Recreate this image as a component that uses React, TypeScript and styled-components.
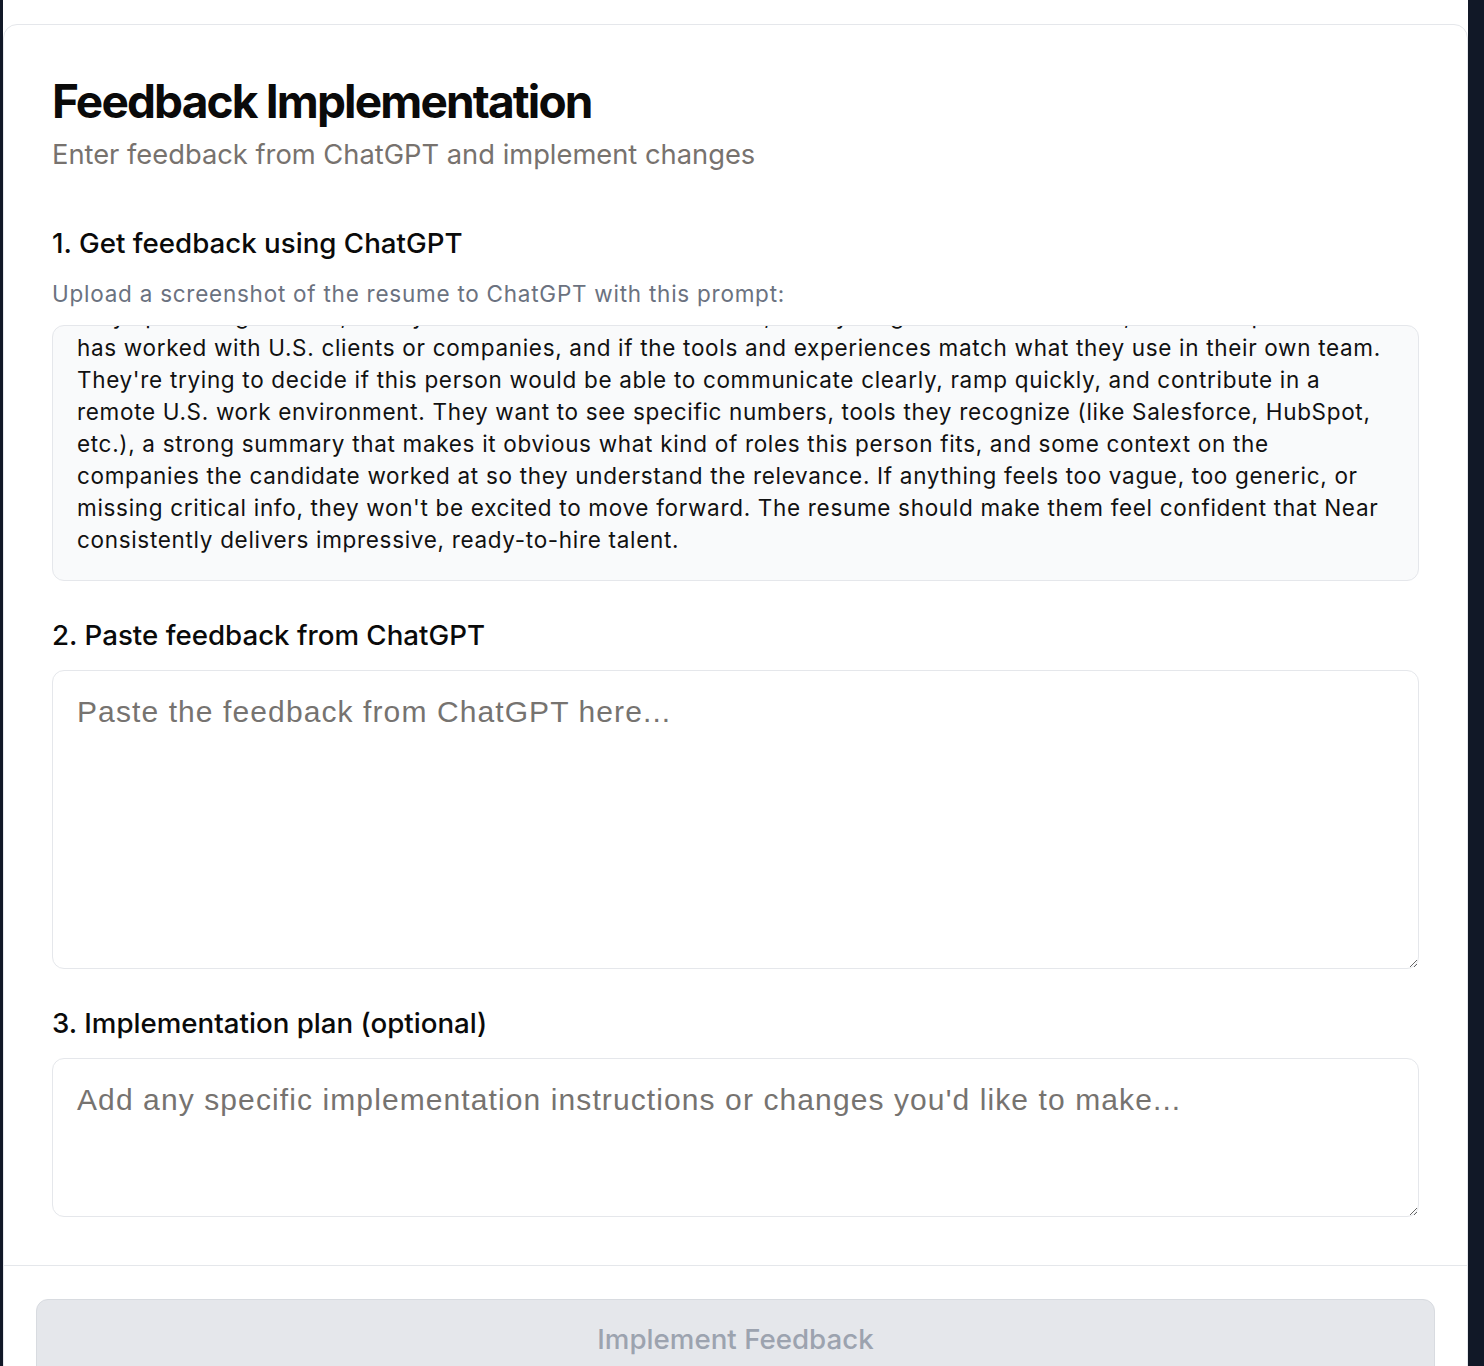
import React, { useEffect, useRef } from "react"
import styled, { createGlobalStyle } from "styled-components"

const GlobalStyle = createGlobalStyle`
  html, body {
    margin: 0;
    padding: 0;
    background: #111827;
  }
  body {
    font-family: Inter, "Noto Sans", "Liberation Sans", sans-serif;
    color: #0a0a0a;
  }
  * {
    box-sizing: border-box;
  }
`

const Shell = styled.div`
  margin-left: 3px;
  width: 1465px;
  height: 1366px;
  overflow: hidden;
  background: #ffffff;
  padding-top: 24px;
`

const Card = styled.div`
  border: 1px solid #e5e7eb;
  border-radius: 14px;
  background: #ffffff;
  min-height: 1400px;
`

const Content = styled.div`
  padding: 48px 48px 48px;
`

const Title = styled.h1`
  margin: 0;
  font-size: 46px;
  line-height: 56px;
  font-weight: 700;
  letter-spacing: -0.04em;
  color: #0a0a0a;
`

const Subtitle = styled.p`
  margin: 8px 0 0;
  font-size: 27.3px;
  line-height: 36px;
  color: #77726e;
`

const Sections = styled.div`
  display: flex;
  flex-direction: column;
  gap: 36px;
  margin-top: 52px;
`

const Section = styled.section`
  display: flex;
  flex-direction: column;
`

const Label = styled.h2`
  margin: 0 0 17px;
  font-size: 27.7px;
  line-height: 36px;
  font-weight: 500;
  color: #0a0a0a;
`

const Hint = styled.p`
  margin: 0 0 15px;
  font-size: 22.5px;
  line-height: 32px;
  letter-spacing: 0.75px;
  color: #6b7280;
`

const PromptBox = styled.div`
  height: 256px;
  overflow: hidden;
  padding: 24px;
  background: #f9fafb;
  border: 1px solid #e5e7eb;
  border-radius: 12px;
  font-size: 22.5px;
  line-height: 32px;
  letter-spacing: 0.68px;
  color: #111111;
`

const PromptLine = styled.div`
  white-space: nowrap;
`

const Field = styled.textarea<{ $height: number }>`
  display: block;
  width: 100%;
  height: ${p => p.$height}px;
  padding: 24px;
  border: 1px solid #e5e7eb;
  border-radius: 12px;
  background: #ffffff;
  font-family: "Liberation Sans", Roboto, sans-serif;
  font-size: 30px;
  line-height: 34px;
  letter-spacing: 1.1px;
  color: #111111;
  resize: vertical;
  outline: none;

  &::placeholder {
    color: #767370;
  }
`

const Footer = styled.div`
  border-top: 1px solid #e5e7eb;
  padding: 33px 32px;
`

const SubmitButton = styled.button`
  display: block;
  width: 100%;
  height: 80px;
  border: 1px solid #d8dbe0;
  border-radius: 12px;
  background: #e5e7eb;
  font-family: Inter, "Noto Sans", sans-serif;
  font-size: 27.7px;
  font-weight: 500;
  color: #9ca3af;
  cursor: not-allowed;
`

const promptLines = [
  "You are a hiring manager at a U.S.-based company reviewing this resume for a potential new hire. The candidate",
  "was sourced by Near, a recruiting company that places pre-vetted talent from Latin America with U.S. companies.",
  "You are busy and skim resumes quickly. You want to know right away if the candidate has relevant experience, if",
  "they speak English well, if they have a track record of results, if they've grown in their career, and if the person",
  "has worked with U.S. clients or companies, and if the tools and experiences match what they use in their own team.",
  "They're trying to decide if this person would be able to communicate clearly, ramp quickly, and contribute in a",
  "remote U.S. work environment. They want to see specific numbers, tools they recognize (like Salesforce, HubSpot,",
  "etc.), a strong summary that makes it obvious what kind of roles this person fits, and some context on the",
  "companies the candidate worked at so they understand the relevance. If anything feels too vague, too generic, or",
  "missing critical info, they won't be excited to move forward. The resume should make them feel confident that Near",
  "consistently delivers impressive, ready-to-hire talent.",
]

function Prompt() {
  const ref = useRef<HTMLDivElement>(null)
  useEffect(() => {
    if (ref.current) ref.current.scrollTop = ref.current.scrollHeight
  }, [])
  return (
    <PromptBox ref={ref}>
      {promptLines.map((line, i) => (
        <PromptLine key={i}>{line}</PromptLine>
      ))}
    </PromptBox>
  )
}

export default function App() {
  return (
    <>
      <GlobalStyle />
      <Shell>
        <Card>
          <Content>
            <Title>Feedback Implementation</Title>
            <Subtitle>Enter feedback from ChatGPT and implement changes</Subtitle>
            <Sections>
              <Section>
                <Label>1. Get feedback using ChatGPT</Label>
                <Hint>Upload a screenshot of the resume to ChatGPT with this prompt:</Hint>
                <Prompt />
              </Section>
              <Section>
                <Label>2. Paste feedback from ChatGPT</Label>
                <Field $height={299} placeholder="Paste the feedback from ChatGPT here..." />
              </Section>
              <Section>
                <Label>3. Implementation plan (optional)</Label>
                <Field
                  $height={159}
                  placeholder="Add any specific implementation instructions or changes you'd like to make..."
                />
              </Section>
            </Sections>
          </Content>
          <Footer>
            <SubmitButton disabled>Implement Feedback</SubmitButton>
          </Footer>
        </Card>
      </Shell>
    </>
  )
}
